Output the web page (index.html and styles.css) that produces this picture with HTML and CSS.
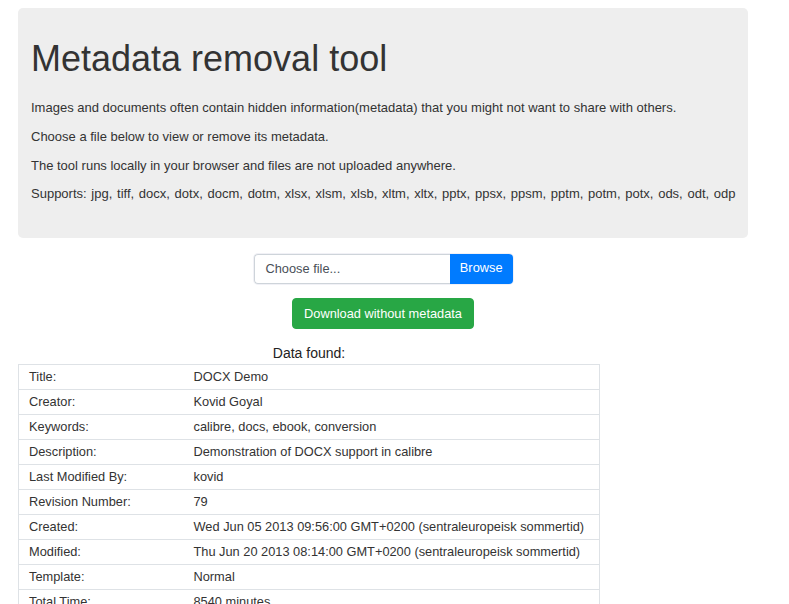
FILE: index.html
```html
<!DOCTYPE html>
<html lang="en">
<head>
<meta charset="utf-8">
<title>Metadata removal tool</title>
<link rel="stylesheet" href="styles.css">
</head>
<body>
<div class="page">
  <div class="jumbotron">
    <h1 class="title">Metadata removal tool</h1>
    <p class="lead">Images and documents often contain hidden information(metadata) that you might not want to share with others.</p>
    <p class="lead">Choose a file below to view or remove its metadata.</p>
    <p class="lead">The tool runs locally in your browser and files are not uploaded anywhere.</p>
    <p class="lead lead-formats">Supports: jpg, tiff, docx, dotx, docm, dotm, xlsx, xlsm, xlsb, xltm, xltx, pptx, ppsx, ppsm, pptm, potm, potx, ods, odt, odp</p>
  </div>

  <div class="actions">
    <div class="file-group">
      <span class="file-label">Choose file...</span>
      <span class="file-browse">Browse</span>
    </div>
    <button class="btn-download" type="button">Download without metadata</button>
  </div>

  <table class="meta-table">
    <caption class="meta-caption">Data found:</caption>
    <colgroup>
      <col class="col-key">
      <col class="col-val">
    </colgroup>
    <tbody>
      <tr><td>Title:</td><td>DOCX Demo</td></tr>
      <tr><td>Creator:</td><td>Kovid Goyal</td></tr>
      <tr><td>Keywords:</td><td>calibre, docs, ebook, conversion</td></tr>
      <tr><td>Description:</td><td>Demonstration of DOCX support in calibre</td></tr>
      <tr><td>Last Modified By:</td><td>kovid</td></tr>
      <tr><td>Revision Number:</td><td>79</td></tr>
      <tr><td>Created:</td><td>Wed Jun 05 2013 09:56:00 GMT+0200 (sentraleuropeisk sommertid)</td></tr>
      <tr><td>Modified:</td><td>Thu Jun 20 2013 08:14:00 GMT+0200 (sentraleuropeisk sommertid)</td></tr>
      <tr><td>Template:</td><td>Normal</td></tr>
      <tr><td>Total Time:</td><td>8540 minutes</td></tr>
    </tbody>
  </table>
</div>
</body>
</html>
```

FILE: styles.css
```css
html, body {
  margin: 0;
  padding: 0;
  background: #ffffff;
}

body {
  font-family: "Liberation Sans", Arial, Helvetica, sans-serif;
  font-size: 12.8px;
  line-height: 19.2px;
  color: #333333;
}

.page {
  width: 730px;
  margin: 8px 0 0 18px;
}

.jumbotron {
  background: #eeeeee;
  border-radius: 5px;
  padding: 31px 13px 34px;
}

.title {
  margin: 0 0 19px;
  font-size: 36px;
  line-height: 40px;
  font-weight: 400;
  color: #333333;
}

.lead {
  margin: 0 0 9.6px;
  font-size: 13px;
}

.lead-formats {
  white-space: nowrap;
  word-spacing: 1.1px;
}

.lead:last-child {
  margin-bottom: 0;
}

.actions {
  display: flex;
  flex-direction: column;
  align-items: center;
  padding-top: 16px;
}

.file-group {
  display: flex;
  width: 259px;
  height: 30px;
  box-sizing: border-box;
  border-radius: 4px;
  box-shadow: 0 0 0 1px #f1f1f6;
}

.file-label {
  flex: 1;
  box-sizing: border-box;
  border: 1px solid #ced4da;
  border-right: none;
  border-radius: 4px 0 0 4px;
  padding: 4px 11px 0;
  color: #495057;
  background: #ffffff;
}

.file-browse {
  box-sizing: border-box;
  padding: 4px 10px 0;
  background: #007bff;
  color: #ffffff;
  border-radius: 0 4px 4px 0;
}

.btn-download {
  margin-top: 14px;
  font-family: "Liberation Sans", Arial, Helvetica, sans-serif;
  font-size: 12.8px;
  line-height: 19.2px;
  color: #ffffff;
  background: #28a745;
  border: 1px solid #28a745;
  border-radius: 4px;
  padding: 5px 11px;
  cursor: pointer;
}

.meta-table {
  margin-top: 14px;
  width: 582px;
  border-collapse: collapse;
  table-layout: fixed;
  border: 1px solid #dee2e6;
}

.meta-caption {
  caption-side: top;
  font-size: 14px;
  line-height: 20px;
  padding-bottom: 1.6px;
  color: #222222;
  text-align: center;
}

.col-key {
  width: 165px;
}

.meta-table tr {
  border-top: 1px solid #dee2e6;
}

.meta-table td {
  padding: 2px 10px 2.8px;
  vertical-align: top;
  white-space: nowrap;
}
```
